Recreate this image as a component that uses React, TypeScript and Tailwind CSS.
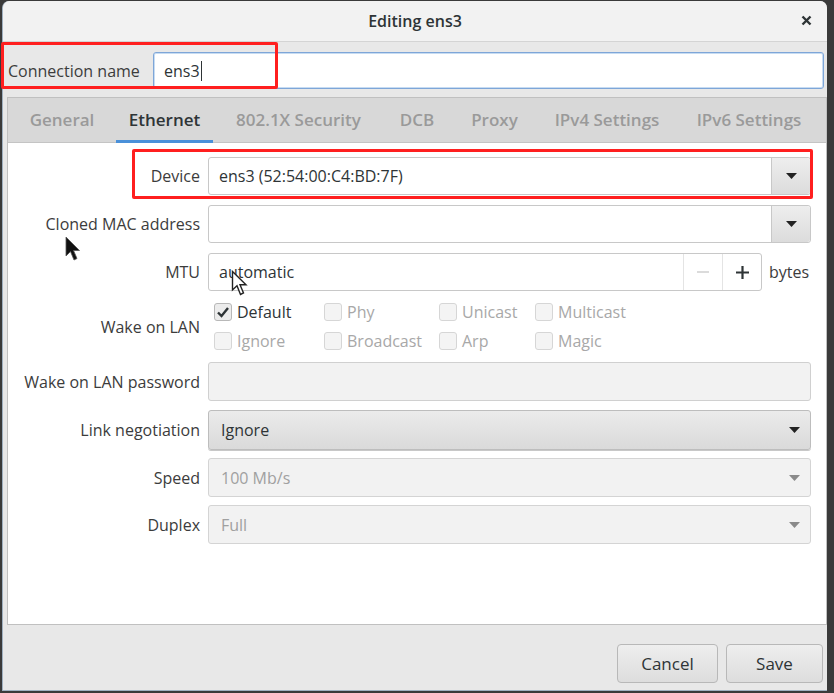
import React from "react";

const font = { fontFamily: '"Open Sans", "Noto Sans", sans-serif' };

function Arrow({ disabled }: { disabled?: boolean }) {
  return (
    <svg width="11" height="6" viewBox="0 0 11 6">
      <path d="M0 0 L11 0 L5.5 6 Z" fill={disabled ? "#8a8a8a" : "#222"} />
    </svg>
  );
}

function Label({ children }: { children: React.ReactNode }) {
  return (
    <div className="w-[192px] shrink-0 text-right text-[16px] text-[#3c3c3c] leading-none">
      {children}
    </div>
  );
}

function Check({ label, checked }: { label: string; checked?: boolean }) {
  return (
    <div className="flex items-center gap-[5px] h-[20px]">
      <div
        className={
          "w-[18px] h-[18px] rounded-[3px] border flex items-center justify-center " +
          (checked ? "border-[#b8b8b8] bg-[#ececec]" : "border-[#d6d6d6] bg-[#f4f4f4]")
        }
      >
        {checked && (
          <svg width="14" height="14" viewBox="0 0 14 14">
            <path d="M2 7.5 L5.5 11 L12 3" fill="none" stroke="#2e3436" strokeWidth="2.4" />
          </svg>
        )}
      </div>
      <span className={"text-[16px] leading-none " + (checked ? "text-[#2e3436]" : "text-[#a8a8a8]")}>
        {label}
      </span>
    </div>
  );
}

export default function App() {
  return (
    <div className="relative w-[834px] h-[693px] bg-[#3a3a3a] overflow-hidden" style={font}>
      {/* dialog */}
      <div className="absolute left-[2px] top-[1px] w-[825px] h-[690px] bg-[#e8e8e8] rounded-t-[7px] border-l border-b border-[#9fb0c0] flex flex-col">
        {/* title bar */}
        <div className="relative h-[41px] shrink-0 bg-[#f2f2f2] rounded-t-[7px] border-b border-[#d4d4d4] flex items-center justify-center">
          <span className="text-[16px] text-[#2e3436] font-semibold">Editing ens3</span>
          <svg className="absolute right-[15px] top-[14px]" width="11" height="11" viewBox="0 0 11 11">
            <path d="M1.5 1.5 L9.5 9.5 M9.5 1.5 L1.5 9.5" stroke="#2e3436" strokeWidth="2.4" />
          </svg>
        </div>
        {/* connection name */}
        <div className="h-[55px] shrink-0 flex items-center pl-[5px] pr-[3px] pt-[2px]">
          <span className="w-[145px] shrink-0 text-[16px] text-[#3c3c3c]">Connection name</span>
          <div className="flex-1 h-[37px] bg-white border border-[#7ea6d8] rounded-[3px] shadow-[inset_0_0_0_1px_#c7dcf2] flex items-center pl-[10px] text-[16px] text-[#2e3436]">
            ens3<span className="inline-block w-[1px] h-[20px] bg-[#2e3436] ml-[1px]" />
          </div>
        </div>
        {/* notebook */}
        <div className="ml-[4px] flex flex-col border border-[#c0c0c0] h-[528px]">
          <div className="h-[45px] shrink-0 bg-[#d8d8d8] border-b border-[#c4c4c4] flex items-stretch text-[17px] font-semibold text-[#9a9a9a]">
            <div className="w-[108px] flex items-center justify-center">General</div>
            <div className="relative w-[97px] flex items-center justify-center text-[#2e3436]">
              Ethernet
              <div className="absolute left-0 right-0 bottom-[-1px] h-[3px] bg-[#4a90d9]" />
            </div>
            <div className="w-[171px] flex items-center justify-center">802.1X Security</div>
            <div className="w-[66px] flex items-center justify-center">DCB</div>
            <div className="w-[89px] flex items-center justify-center">Proxy</div>
            <div className="w-[136px] flex items-center justify-center">IPv4 Settings</div>
            <div className="w-[148px] flex items-center justify-center">IPv6 Settings</div>
          </div>
          <div className="flex-1 bg-white flex flex-col pt-[14px] gap-[10px] pr-[15px]">
            {/* device */}
            <div className="flex items-center gap-[8px] h-[38px]">
              <Label>Device</Label>
              <div className="flex-1 h-[38px] flex border border-[#c8c8c8] rounded-[3px] bg-white">
                <div className="flex-1 flex items-center pl-[10px] text-[16px] text-[#2e3436]">
                  ens3 (52:54:00:C4:BD:7F)
                </div>
                <div className="w-[39px] flex items-center justify-center border-l border-[#c8c8c8] bg-gradient-to-b from-[#eeeeee] to-[#dcdcdc] rounded-r-[3px]">
                  <Arrow />
                </div>
              </div>
            </div>
            {/* cloned */}
            <div className="flex items-center gap-[8px] h-[38px]">
              <Label>Cloned MAC address</Label>
              <div className="flex-1 h-[38px] flex border border-[#c8c8c8] rounded-[3px] bg-white">
                <div className="flex-1" />
                <div className="w-[39px] flex items-center justify-center border-l border-[#c8c8c8] bg-gradient-to-b from-[#eeeeee] to-[#dcdcdc] rounded-r-[3px]">
                  <Arrow />
                </div>
              </div>
            </div>
            {/* MTU */}
            <div className="flex items-center gap-[8px] h-[38px]">
              <Label>MTU</Label>
              <div className="flex-1 flex items-center gap-[7px]">
                <div className="flex-1 h-[38px] flex border border-[#c8c8c8] rounded-[3px] bg-white">
                  <div className="flex-1 flex items-center pl-[10px] text-[16px] text-[#2e3436]">automatic</div>
                  <div className="w-[39px] flex items-center justify-center border-l border-[#e4e4e4]">
                    <svg width="12" height="12" viewBox="0 0 12 12"><path d="M0 6 H12" stroke="#cfcfcf" strokeWidth="1.5" /></svg>
                  </div>
                  <div className="w-[39px] flex items-center justify-center border-l border-[#e4e4e4]">
                    <svg width="13" height="13" viewBox="0 0 13 13"><path d="M0 6.5 H13 M6.5 0 V13" stroke="#2e3436" strokeWidth="2.2" /></svg>
                  </div>
                </div>
                <span className="text-[16px] text-[#3c3c3c] w-[42px]">bytes</span>
              </div>
            </div>
            {/* wake on lan */}
            <div className="flex items-center gap-[8px] h-[51px]">
              <Label>Wake on LAN</Label>
              <div className="flex-1 pl-[6px] grid grid-cols-[110px_115px_96px_120px] gap-y-[9px]">
                <Check label="Default" checked />
                <Check label="Phy" />
                <Check label="Unicast" />
                <Check label="Multicast" />
                <Check label="Ignore" />
                <Check label="Broadcast" />
                <Check label="Arp" />
                <Check label="Magic" />
              </div>
            </div>
            {/* password */}
            <div className="flex items-center gap-[8px] h-[39px]">
              <Label>Wake on LAN password</Label>
              <div className="flex-1 h-[39px] border border-[#d0d0d0] rounded-[3px] bg-[#f2f2f2]" />
            </div>
            {/* link negotiation */}
            <div className="flex items-center gap-[8px] h-[40px] -mt-[1px]">
              <Label>Link negotiation</Label>
              <div className="flex-1 h-[40px] flex items-center justify-between pl-[12px] pr-[10px] border border-[#bdbdbd] rounded-[3px] bg-gradient-to-b from-[#ebebeb] to-[#dadada] shadow-[0_1px_0_#c8c8c8]">
                <span className="text-[16px] text-[#2e3436]">Ignore</span>
                <Arrow />
              </div>
            </div>
            {/* speed */}
            <div className="flex items-center gap-[8px] h-[39px] -mt-[2px]">
              <Label>Speed</Label>
              <div className="flex-1 h-[39px] flex items-center justify-between pl-[12px] pr-[10px] border border-[#d4d4d4] rounded-[3px] bg-[#f2f2f2]">
                <span className="text-[16px] text-[#a0a0a0]">100 Mb/s</span>
                <Arrow disabled />
              </div>
            </div>
            {/* duplex */}
            <div className="flex items-center gap-[8px] h-[39px] -mt-[2px]">
              <Label>Duplex</Label>
              <div className="flex-1 h-[39px] flex items-center justify-between pl-[12px] pr-[10px] border border-[#d4d4d4] rounded-[3px] bg-[#f2f2f2]">
                <span className="text-[16px] text-[#a0a0a0]">Full</span>
                <Arrow disabled />
              </div>
            </div>
          </div>
        </div>
        {/* buttons */}
        <div className="flex-1 flex items-center justify-end gap-[8px] pr-[4px] pt-[12px]">
          <div className="w-[101px] h-[39px] flex items-center justify-center rounded-[4px] border border-[#b8b8b8] bg-gradient-to-b from-[#eeeeee] to-[#dddddd] text-[17px] text-[#2e3436]">Cancel</div>
          <div className="w-[97px] h-[39px] flex items-center justify-center rounded-[4px] border border-[#b8b8b8] bg-gradient-to-b from-[#eeeeee] to-[#dddddd] text-[17px] text-[#2e3436]">Save</div>
        </div>
      </div>

      {/* annotation boxes */}
      <div className="absolute left-[1px] top-[42px] w-[277px] h-[47px] border-[3px] border-[#ff1f1f] rounded-[2px]" />
      <div className="absolute left-[132px] top-[149px] w-[681px] h-[50px] border-[3px] border-[#ff1f1f] rounded-[2px]" />

      {/* cursors */}
      <svg className="absolute left-[65px] top-[236px]" width="16" height="26" viewBox="0 0 16 26">
        <path d="M1 1 L1 20 L5.5 15.5 L9 24 L12 22.5 L8.5 14.5 L14.5 14.5 Z" fill="#111" stroke="#555" strokeWidth="0.8" />
      </svg>
      <svg className="absolute left-[231px] top-[270px]" width="18" height="27" viewBox="0 0 18 27">
        <path d="M1.5 1.5 L1.5 20 L6 15.8 L9.5 24.5 L12.5 23 L9 14.8 L15 14.8 Z" fill="#fff" stroke="#222" strokeWidth="1.4" />
      </svg>
    </div>
  );
}
